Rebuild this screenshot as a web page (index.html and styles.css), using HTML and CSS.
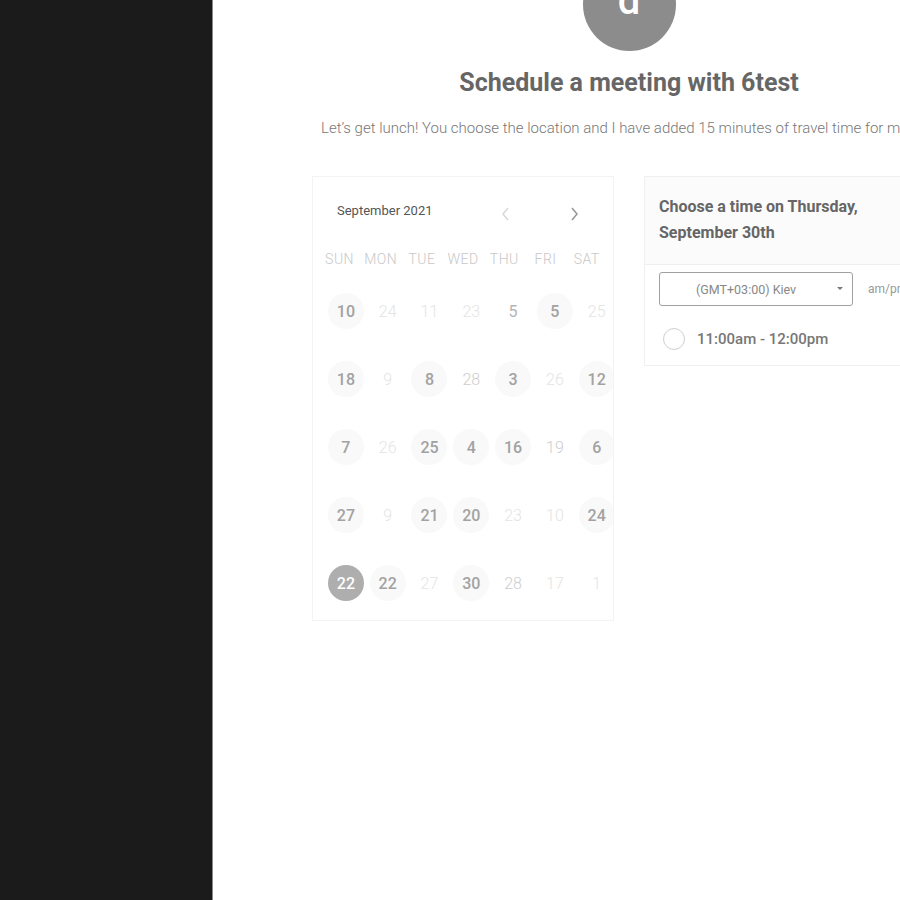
FILE: index.html
```html
<!DOCTYPE html>
<html>
<head>
<meta charset="utf-8">
<link rel="stylesheet" href="styles.css">
</head>
<body>
<aside class="sidebar"></aside>
<main class="main">
  <div class="column">
    <div class="avatar"><span>d</span></div>
    <h1 class="title">Schedule a meeting with 6test</h1>
    <p class="subtitle">Let’s get lunch! You choose the location and I have added 15 minutes of travel time for me to get there.</p>
    <div class="cards">
      <section class="calendar">
        <div class="cal-head">
          <span class="month">September 2021</span>
          <span class="arrow prev">
            <svg width="10" height="14" viewBox="0 0 10 14"><path d="M7 1 L2 7 L7 13" fill="none" stroke="#d6d6d6" stroke-width="1.4"/></svg>
          </span>
          <span class="arrow next">
            <svg width="10" height="14" viewBox="0 0 10 14"><path d="M3 1 L8 7 L3 13" fill="none" stroke="#9a9a9a" stroke-width="1.6"/></svg>
          </span>
        </div>
        <div class="grid weekdays">
          <span>SUN</span><span>MON</span><span>TUE</span><span>WED</span><span>THU</span><span>FRI</span><span>SAT</span>
        </div>
        <div class="grid days">
          <span class="d av">10</span><span class="d off">24</span><span class="d off">11</span><span class="d off">23</span><span class="d mid">5</span><span class="d av">5</span><span class="d off">25</span>
          <span class="d av">18</span><span class="d off">9</span><span class="d av">8</span><span class="d dim">28</span><span class="d av">3</span><span class="d off">26</span><span class="d av">12</span>
          <span class="d av">7</span><span class="d off">26</span><span class="d av">25</span><span class="d av">4</span><span class="d av">16</span><span class="d dim">19</span><span class="d av">6</span>
          <span class="d av">27</span><span class="d off">9</span><span class="d av">21</span><span class="d av">20</span><span class="d off">23</span><span class="d off">10</span><span class="d av">24</span>
          <span class="d sel">22</span><span class="d av">22</span><span class="d off">27</span><span class="d av">30</span><span class="d dim">28</span><span class="d off">17</span><span class="d off">1</span>
        </div>
      </section>
      <section class="times">
        <div class="times-head">Choose a time on Thursday,<br>September 30th</div>
        <div class="times-body">
          <div class="controls">
            <div class="select"><span class="select-text">(GMT+03:00) Kiev</span><span class="caret"></span></div>
            <span class="ampm">am/pm</span>
          </div>
          <label class="slot"><span class="radio"></span><span class="slot-text">11:00am - 12:00pm</span></label>
        </div>
      </section>
    </div>
  </div>
</main>
</body>
</html>
```
FILE: styles.css
```css
html, body {
  margin: 0;
  height: 900px;
  overflow: hidden;
  background: #ffffff;
}
body {
  display: flex;
  font-family: Roboto, "Liberation Sans", sans-serif;
}
.sidebar {
  width: 212px;
  flex: none;
  background: #1b1b1b;
  border-right: 1px solid #8a8a8a;
}
.main {
  flex: 1;
  min-width: 0;
  overflow: hidden;
  padding-left: 99px;
}
.column {
  width: 638px;
  display: flex;
  flex-direction: column;
  align-items: center;
}
.avatar {
  width: 93px;
  height: 93px;
  border-radius: 50%;
  background: #8c8c8c;
  margin-top: -42px;
  margin-left: -4px;
  display: flex;
  justify-content: center;
  align-items: center;
}
.avatar span {
  color: #fff;
  font-size: 40px;
  font-weight: 500;
  margin-top: -8px;
}
.title {
  margin: 17px 0 0 0;
  font-size: 25px;
  line-height: 30px;
  font-weight: 700;
  color: #666;
  letter-spacing: 0;
  margin-left: -4px;
}
.subtitle {
  margin: 20px 0 0 0;
  white-space: nowrap;
  font-size: 15px;
  line-height: 20px;
  font-weight: 300;
  color: #777;
  width: 628px;
  padding-left: 8px;
}
.cards {
  align-self: stretch;
  margin-top: 38px;
  display: flex;
  gap: 30px;
  align-items: flex-start;
}
.calendar {
  width: 300px;
  height: 443px;
  border: 1px solid #f3f3f3;
  overflow: hidden;
}
.cal-head {
  display: flex;
  align-items: center;
  height: 20px;
  margin-top: 23px;
  padding-left: 24px;
}
.month {
  font-size: 13px;
  color: #555;
  font-weight: 400;
  width: 159px;
}
.arrow {
  display: flex;
  margin-top: 8px;
}
.arrow.prev { margin-left: 5px; }
.arrow.next { margin-left: 58px; }
.grid {
  display: grid;
}
.weekdays {
  grid-template-columns: repeat(7, 41.2px);
  padding-left: 6px;
  margin-top: 29px;
  height: 20px;
  align-items: center;
}
.weekdays span {
  text-align: center;
  font-size: 14px;
  font-weight: 300;
  color: #c8c8c8;
  letter-spacing: 0.5px;
}
.days {
  grid-template-columns: repeat(7, 41.8px);
  padding-left: 12px;
  margin-top: 8px;
  grid-auto-rows: 68px;
}
.d {
  justify-self: center;
  align-self: center;
  width: 36px;
  height: 36px;
  border-radius: 50%;
  display: flex;
  align-items: center;
  justify-content: center;
  font-size: 16px;
}
.d.av {
  background: #f9f9f9;
  color: #a2a2a2;
  font-weight: 500;
}
.d.sel {
  background: #aeaeae;
  color: #fff;
  font-weight: 500;
}
.d.off {
  color: #e4e4e4;
  font-weight: 300;
}
.d.dim {
  color: #cdcdcd;
  font-weight: 300;
}
.d.mid {
  color: #b4b4b4;
  font-weight: 400;
}
.times {
  flex: 1;
  border: 1px solid #f0f0f0;
}
.times-head {
  background: #fbfbfb;
  border-bottom: 1px solid #efefef;
  padding: 17px 14px 18px 14px;
  font-size: 16px;
  line-height: 26px;
  font-weight: 700;
  color: #666;
}
.times-body {
  padding: 7px 14px 15px 14px;
}
.controls {
  display: flex;
  align-items: center;
}
.select {
  width: 192px;
  height: 32px;
  border: 1px solid #a0a0a0;
  border-radius: 3px;
  display: flex;
  align-items: center;
  position: relative;
}
.select-text {
  margin-left: 36px;
  font-size: 12.5px;
  color: #888;
}
.caret {
  position: absolute;
  right: 9px;
  top: 14px;
  width: 0;
  height: 0;
  border-left: 3px solid transparent;
  border-right: 3px solid transparent;
  border-top: 3px solid #777;
}
.ampm {
  margin-left: 15px;
  font-size: 12px;
  color: #999;
}
.slot {
  display: flex;
  align-items: center;
  margin-top: 22px;
}
.radio {
  width: 20px;
  height: 20px;
  border: 1.5px solid #cfcfcf;
  border-radius: 50%;
  margin-left: 4px;
}
.slot-text {
  margin-left: 12px;
  font-size: 15px;
  font-weight: 500;
  color: #777;
}
```
